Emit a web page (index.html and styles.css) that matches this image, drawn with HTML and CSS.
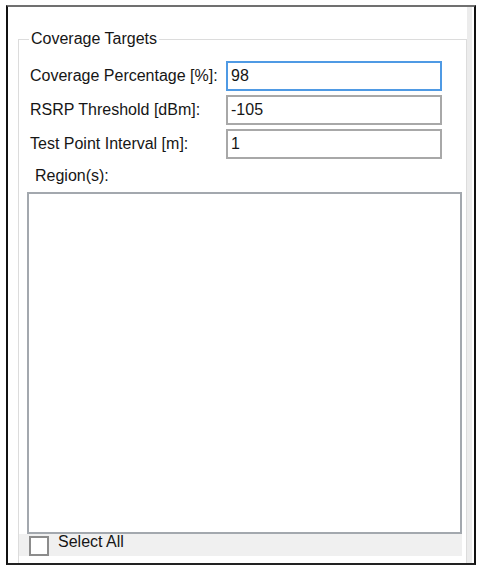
FILE: index.html
```html
<!DOCTYPE html>
<html lang="en">
<head>
    <meta charset="UTF-8">
    <title>Coverage Targets</title>
    <link rel="stylesheet" href="styles.css">
</head>
<body>
<div class="window">
    <div class="pane">
        <fieldset class="group">
            <legend>Coverage Targets</legend>
            <div class="fields">
                <label for="coverage">Coverage Percentage [%]:</label>
                <input type="text" id="coverage" class="focused" value="98">
                <label for="rsrp">RSRP Threshold [dBm]:</label>
                <input type="text" id="rsrp" value="-105">
                <label for="interval">Test Point Interval [m]:</label>
                <input type="text" id="interval" value="1">
            </div>
            <div class="region-label">Region(s):</div>
            <div class="region-box">
                <div class="listbox"></div>
                <div class="select-row">
                    <span class="checkbox"></span>
                    <span class="select-text">Select All</span>
                </div>
            </div>
        </fieldset>
    </div>
    <div class="edge"></div>
</div>
</body>
</html>
```

FILE: styles.css
```css
body {
    margin: 0;
    background: #fff;
    font-family: "Liberation Sans", Arial, sans-serif;
    font-size: 16px;
    color: #161616;
}
.window {
    margin: 5px 0 0 6px;
    width: 466px;
    height: 556px;
    border-top: 2px solid #707070;
    border-left: 2px solid #111;
    border-right: 2px solid #111;
    border-bottom: 2px solid #222;
    display: flex;
}
.pane {
    width: 459px;
    display: flex;
    flex-direction: column;
}
.edge {
    width: 5px;
    background: #ececec;
}
.group {
    margin: 23px 0 0 10px;
    padding: 0;
    flex: 1;
    border: 1px solid #dcdcdc;
    border-bottom: none;
    display: flex;
    flex-direction: column;
}
.group legend {
    margin-left: 10px;
    padding: 0 2px;
    line-height: 18px;
}
.fields {
    margin-top: 13px;
    display: grid;
    grid-template-columns: 196px 216px;
    grid-auto-rows: 30px;
    row-gap: 4px;
    padding-left: 11px;
    align-items: center;
}
.fields input {
    box-sizing: border-box;
    height: 30px;
    width: 216px;
    margin: 0;
    padding: 0 0 0 3px;
    border: 2px solid #a8a8a8;
    font: inherit;
    color: #161616;
    outline: none;
}
.fields input.focused {
    border-color: #4f9ae4;
}
.region-label {
    margin: 8px 0 0 16px;
    line-height: 18px;
}
.region-box {
    margin-top: 7px;
    width: 443px;
    display: flex;
    flex-direction: column;
}
.listbox {
    margin-left: 8px;
    height: 338px;
    border: 2px solid #a3a8ae;
    background: #fff;
}
.select-row {
    height: 22px;
    background: #f0f0f0;
    display: flex;
    align-items: flex-start;
    gap: 9px;
    padding-left: 10px;
}
.checkbox {
    width: 16px;
    height: 16px;
    border: 2px solid #8c8c8c;
    background: #fff;
    margin-top: 2px;
}
.select-text {
    line-height: 16px;
}
```
